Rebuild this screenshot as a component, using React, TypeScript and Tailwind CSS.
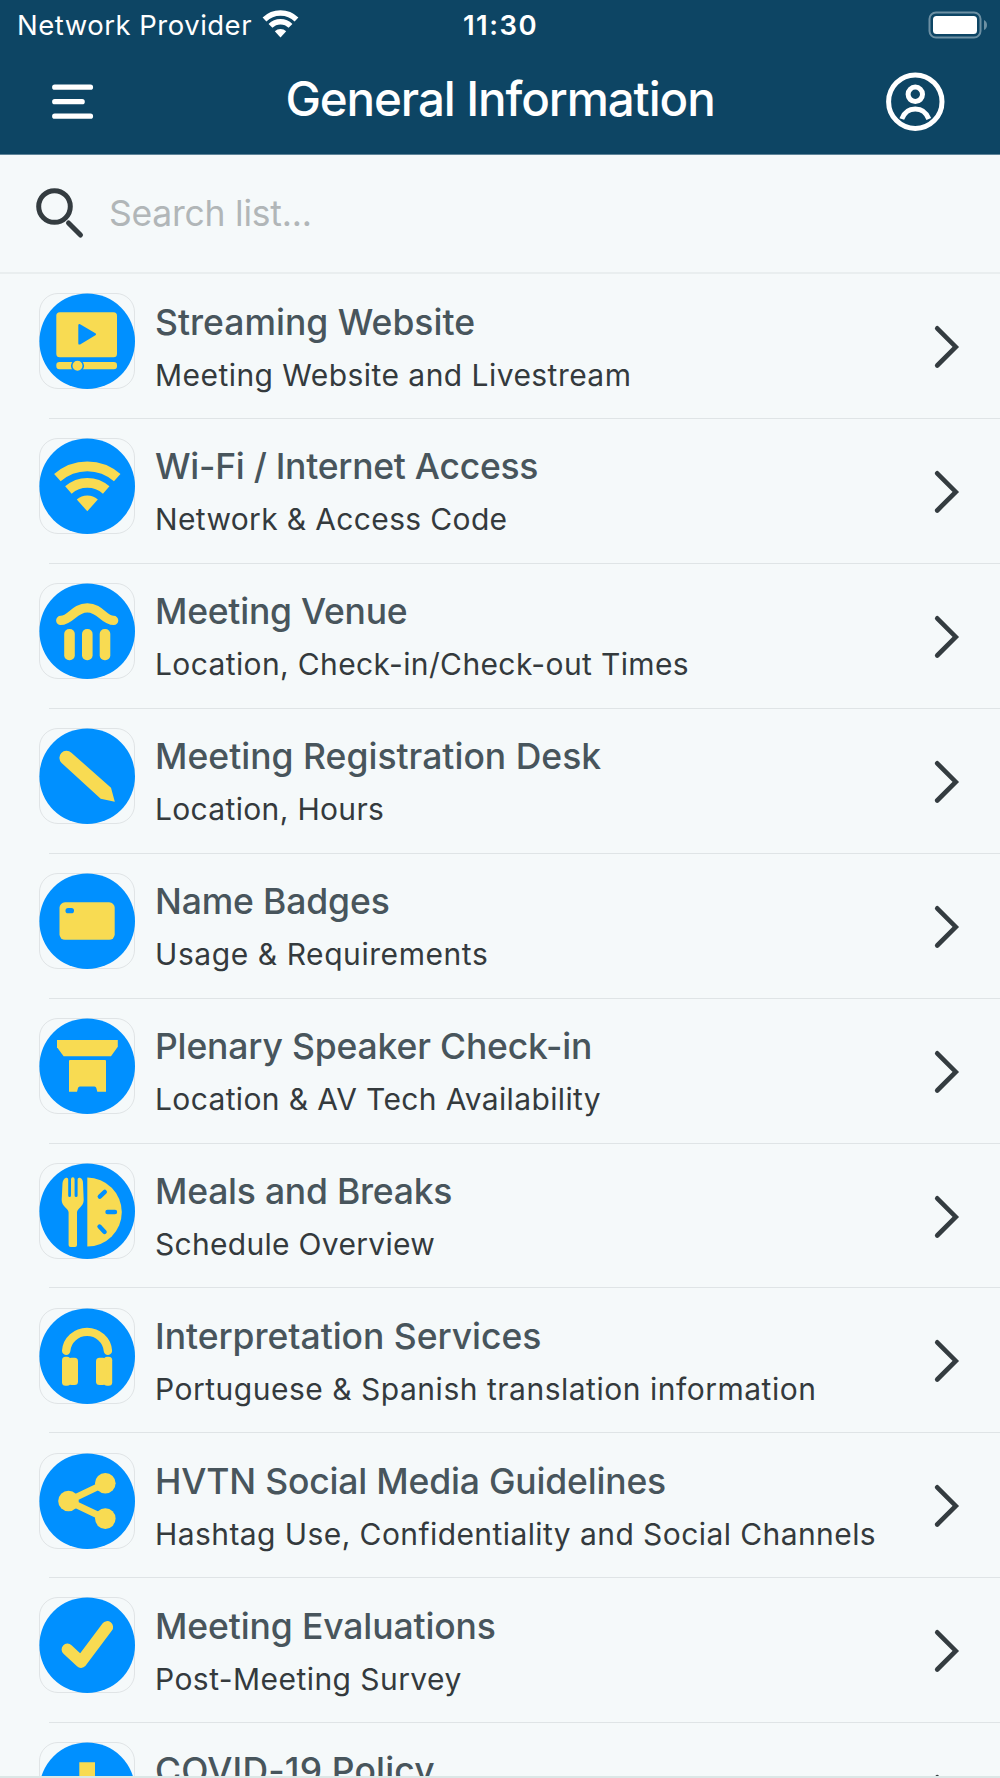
import type { ReactNode } from "react"

type Item = {
  title: string
  titleClass: string
  subtitle?: string
  subtitleClass?: string
  icon: ReactNode
}

const items: Item[] = [
  {
    title: "Streaming Website",
    titleClass: "tracking-[0px]",
    subtitle: "Meeting Website and Livestream",
    subtitleClass: "tracking-[0.45px]",
    icon: (
      <>
        <rect x="17.3" y="19.3" width="60.7" height="45" rx="3.5" />
        <path d="M40.5 32.2v18.2L55.8 41.2z" className="fill-[#0090ff] stroke-[#0090ff]" strokeWidth="2.4" strokeLinejoin="round" />
        <rect x="17.3" y="69" width="60.7" height="7.3" rx="3.2" />
        <circle cx="38.5" cy="72.8" r="5.8" className="stroke-[#0090ff]" strokeWidth="1.6" />
      </>
    ),
  },
  {
    title: "Wi-Fi / Internet Access",
    titleClass: "tracking-[-0.27px]",
    subtitle: "Network & Access Code",
    subtitleClass: "tracking-[0.35px]",
    icon: (
      <>
        <path d="M18.4 39.7a45 45 0 0 1 59.8 0M29.4 52a28.5 28.5 0 0 1 37.8 0" fill="none" className="stroke-[#f8db52]" strokeWidth="9.8" />
        <path d="M48.3 73.3 37.8 61.5a16 16 0 0 1 21 0z" />
      </>
    ),
  },
  {
    title: "Meeting Venue",
    titleClass: "tracking-[-0.25px]",
    subtitle: "Location, Check-in/Check-out Times",
    subtitleClass: "tracking-[0.37px]",
    icon: (
      <>
        <path
          d="M21.7 37.4C32 37.4 35 24.8 48.3 24.8S64.5 37.4 74.7 37.4"
          fill="none"
          className="stroke-[#f8db52]"
          strokeWidth="9.2"
          strokeLinecap="round"
        />
        <rect x="25.2" y="46" width="10.6" height="31.2" rx="5" />
        <rect x="43" y="46" width="10.6" height="31.2" rx="5" />
        <rect x="60.7" y="46" width="10.6" height="31.2" rx="5" />
      </>
    ),
  },
  {
    title: "Meeting Registration Desk",
    titleClass: "tracking-[0.01px]",
    subtitle: "Location, Hours",
    subtitleClass: "tracking-[0.33px]",
    icon: <path d="M22.6 35A7 7 0 0 1 32.4 24.7L72 59.8 75.8 73.8 61.7 70.7z" />,
  },
  {
    title: "Name Badges",
    titleClass: "tracking-[-0.15px]",
    subtitle: "Usage & Requirements",
    subtitleClass: "tracking-[0.57px]",
    icon: (
      <>
        <rect x="20.5" y="29.3" width="55.2" height="37.5" rx="5.5" />
        <rect x="26.5" y="35" width="8.5" height="5.3" rx="2.6" className="fill-[#0090ff]" />
      </>
    ),
  },
  {
    title: "Plenary Speaker Check-in",
    titleClass: "tracking-[-0.16px]",
    subtitle: "Location & AV Tech Availability",
    subtitleClass: "tracking-[0.36px]",
    icon: (
      <>
        <path d="M18 22H78.8V28.8L72 38.2H24.6L18 29.2z" />
        <path d="M31 42H66Q67 42 67 43V73.7H58.3L57.3 70Q57 68.4 55.5 68.4H40.8Q39.3 68.4 39 70L38 73.7H30V43Q30 42 31 42z" />
      </>
    ),
  },
  {
    title: "Meals and Breaks",
    titleClass: "tracking-[-0.23px]",
    subtitle: "Schedule Overview",
    subtitleClass: "tracking-[0.3px]",
    icon: (
      <>
        <path d="M27 14.8Q29.2 14.3 29.2 16.5V32.5Q29.2 34 30.6 34T32 32.5V16.3Q32 14.3 33.8 14.3T35.6 16.3V32.5Q35.6 34 37.1 34T38.6 32.5V16.5Q38.6 14.3 41 14.8 44 16 44 20L44.7 37C44.7 44 38 45 38 49.5V82Q38 84 36 84H31.6Q29.6 84 29.6 82V49.5C29.6 45 22.7 44 22.7 37L23.5 20Q24 16 27 14.8z" />
        <path d="M48.3 14.6a34.5 34.5 0 0 1 0 69z" />
        <path d="M60.8 33.7 65.8 28.9M68.5 49H76M60.5 63.6 65.6 69" className="stroke-[#0090ff]" strokeWidth="4.4" strokeLinecap="round" />
      </>
    ),
  },
  {
    title: "Interpretation Services",
    titleClass: "tracking-[-0.04px]",
    subtitle: "Portuguese & Spanish translation information",
    subtitleClass: "tracking-[0.51px]",
    icon: (
      <>
        <path d="M27.2 42.8a20.9 20.3 0 0 1 41.7 0" fill="none" className="stroke-[#f8db52]" strokeWidth="8.4" strokeLinecap="round" />
        <rect x="23" y="48.7" width="8.5" height="29" rx="3.5" />
        <rect x="29" y="49.8" width="10" height="27.2" rx="3.5" />
        <rect x="64.7" y="48.7" width="8.5" height="29" rx="3.5" />
        <rect x="57" y="49.8" width="10.2" height="27.2" rx="3.5" />
      </>
    ),
  },
  {
    title: "HVTN Social Media Guidelines",
    titleClass: "tracking-[-0.18px]",
    subtitle: "Hashtag Use, Confidentiality and Social Channels",
    subtitleClass: "tracking-[0.42px]",
    icon: (
      <>
        <path d="M66.3 30.3 29.3 48 66.3 65.6" fill="none" className="stroke-[#f8db52]" strokeWidth="6.8" />
        <circle cx="29.5" cy="48" r="10.3" />
        <circle cx="66.3" cy="30.3" r="10.3" />
        <circle cx="66.3" cy="65.6" r="10.3" />
      </>
    ),
  },
  {
    title: "Meeting Evaluations",
    titleClass: "tracking-[-0.12px]",
    subtitle: "Post-Meeting Survey",
    subtitleClass: "tracking-[0.44px]",
    icon: (
      <path d="M28.5 52.5 42 65 68.2 30" fill="none" className="stroke-[#f8db52]" strokeWidth="11.8" strokeLinecap="round" strokeLinejoin="round" />
    ),
  },
  {
    title: "COVID-19 Policy",
    titleClass: "tracking-[0.15px]",
    icon: <path d="M40.3 20.3H56V40.3H76V56H56V76H40.3V56H20.3V40.3H40.3z" />,
  },
]

function StatusBar() {
  return (
    <div className="flex h-[50px] items-center justify-between pl-[17px] pr-[12px]">
      <div className="flex w-[300px] items-center gap-[10px]">
        <span className="whitespace-nowrap text-[27.5px] leading-[51px] tracking-[0.5px]">Network Provider</span>
        <svg className="-mt-[2px] h-[28px] w-[37px] shrink-0" viewBox="0 0 37 28">
          <path d="M2.5 9.5a22.8 22.8 0 0 1 32 0M8.5 15.9a14 14 0 0 1 20 0" fill="none" stroke="white" strokeWidth="5.4" />
          <path d="M18.5 27.5 12.8 21.3a8.4 8.4 0 0 1 11.4 0z" fill="white" />
        </svg>
      </div>
      <span className="-ml-[4px] text-[27.5px] font-semibold leading-[51px] tracking-[1.5px]">11:30</span>
      <div className="flex w-[300px] justify-end">
        <svg className="-mt-[1px] h-[28px] w-[60px]" viewBox="0 0 60 28">
          <rect x="1.5" y="1.5" width="51" height="25" rx="6.5" fill="none" stroke="#6d90a3" strokeWidth="2" />
          <rect x="5" y="5" width="44" height="18" rx="3.5" fill="white" />
          <path d="M56 9q3 1.5 3 5t-3 5z" fill="#6d90a3" />
        </svg>
      </div>
    </div>
  )
}

function NavBar() {
  return (
    <div className="flex h-[103px] items-center justify-between pl-[52px] pr-[55px]">
      <svg className="h-[36px] w-[60px]" viewBox="0 0 60 36">
        <path d="M2.7 3.2H38.5M2.7 17.7H30.2M2.7 32.2H38.5" stroke="white" strokeWidth="5.2" strokeLinecap="round" />
      </svg>
      <h1 className="-mt-[5px] ml-[3px] text-[47.5px] font-medium leading-[60px] tracking-[-1.1px]">General Information</h1>
      <svg className="h-[60px] w-[60px]" viewBox="0 0 60 60" fill="none" stroke="white" strokeWidth="5">
        <circle cx="30.3" cy="29.7" r="26.7" />
        <circle cx="30.3" cy="22.3" r="7.2" />
        <path d="M16.8 47C19 41 23.5 37 30.3 37S41.5 41 43.8 47" />
      </svg>
    </div>
  )
}

export default function App() {
  return (
    <div className="flex h-[1778px] w-[1000px] flex-col overflow-hidden bg-[#f5f9fa] font-[Inter,sans-serif]">
      {/* Header */}
      <header className="h-[155px] shrink-0 border-b border-[#5e8499] bg-[#0d4564] text-white">
        <StatusBar />
        <NavBar />
      </header>

      {/* Search */}
      <div className="flex h-[119.2px] shrink-0 items-center border-b-2 border-[#e9eeef] pl-[35px]">
        <svg className="-mt-[2px] h-[52px] w-[50px]" viewBox="0 0 50 52" fill="none" stroke="#343c40" strokeWidth="5">
          <circle cx="19.5" cy="19.5" r="15.8" />
          <path d="M33.5 36 45.5 48" strokeLinecap="round" />
        </svg>
        <input
          className="ml-[24px] mt-px w-[600px] text-[35.5px] tracking-[-0.24px] outline-none placeholder:text-[#b1b6b8]"
          placeholder="Search list..."
        />
      </div>

      {/* List */}
      <ul className="min-h-0 flex-1 overflow-hidden">
        {items.map((item) => (
          <li key={item.title} className="flex h-[144.9px] flex-col">
            <div className="flex flex-1 items-start pl-[39px]">
              <div className="mt-[19.2px] h-[96px] w-[96px] shrink-0 rounded-[19px] border border-[#e0e4e6]">
                <svg className="-m-px h-[96px] w-[96px]" viewBox="0 0 96 96" fill="#f8db52">
                  <circle cx="48.2" cy="48.2" r="47.8" className="fill-[#0090ff]" />
                  {item.icon}
                </svg>
              </div>
              <div className="ml-[20px] mt-[24.4px] flex-1 whitespace-nowrap">
                <div className={`text-[35.5px] font-medium leading-[48px] text-[#48555c] ${item.titleClass}`}>{item.title}</div>
                {item.subtitle && (
                  <div className={`mt-[7px] text-[30px] leading-[42px] text-[#343a3d] ${item.subtitleClass}`}>{item.subtitle}</div>
                )}
              </div>
              <svg className="mr-[39px] mt-[50px] h-[46px] w-[28px]" viewBox="0 0 28 46" fill="none" stroke="#343c40" strokeWidth="4.6">
                <path d="M4.2 4.3 22.8 22.9 4.2 41.5" strokeLinecap="round" />
              </svg>
            </div>
            <div className="ml-[49px] h-px bg-[#dfe4e6]" />
          </li>
        ))}
      </ul>
      <div className="h-[2px] shrink-0 bg-[#dbe7e6]" />
    </div>
  )
}
